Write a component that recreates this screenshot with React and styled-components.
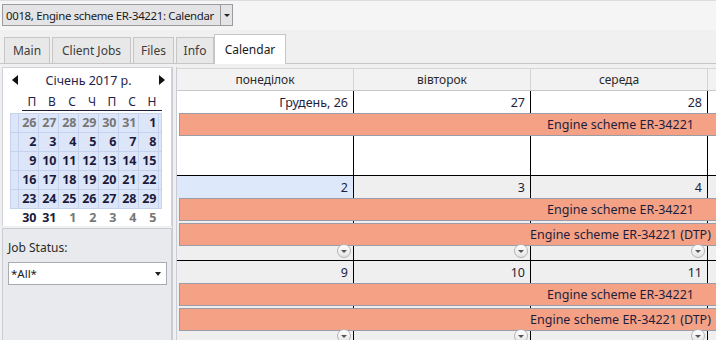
import React from "react";
import styled, { createGlobalStyle } from "styled-components";

const GlobalStyle = createGlobalStyle`
  body {
    margin: 0;
    background: #f0f0f0;
    font-family: "Noto Sans", "Open Sans", sans-serif;
    font-size: 12px;
    color: #1e1e1e;
  }
`;

const Window = styled.div`
  width: 716px;
  height: 340px;
  overflow: hidden;
  display: flex;
  flex-direction: column;
  background: #f0f0f0;
`;

const TopBar = styled.div`
  height: 30px;
  padding: 3px 0 0 2px;
  box-sizing: border-box;
  background: #f5f5f5;
  border-top: 1px solid #dcdcdc;
`;

const Combo = styled.div`
  width: 231px;
  height: 22px;
  box-sizing: border-box;
  display: flex;
  align-items: center;
  background: #e4e4e6;
  border: 1px solid #9b9ba0;
  font-size: 11.4px;
  color: #1a1a1a;
`;

const ComboText = styled.span`
  flex: 1;
  padding-left: 3px;
  white-space: nowrap;
  overflow: hidden;
  letter-spacing: -0.32px;
`;

const ComboButton = styled.span`
  width: 11px;
  height: 100%;
  border-left: 1px solid #9b9ba0;
  display: flex;
  align-items: center;
  justify-content: center;
  &::after {
    content: "";
    border-left: 3px solid transparent;
    border-right: 3px solid transparent;
    border-top: 3px solid #222;
  }
`;

const TabStrip = styled.div`
  height: 34px;
  box-sizing: border-box;
  display: flex;
  align-items: flex-end;
  padding-left: 4px;
  border-bottom: 1px solid #c6c6c6;
`;

const Tab = styled.div`
  width: ${(p) => p.$w}px;
  margin-right: ${(p) => p.$gap}px;
  height: ${(p) => (p.$active ? "30px" : "26px")};
  box-sizing: border-box;
  display: flex;
  align-items: center;
  justify-content: center;
  background: ${(p) => (p.$active ? "#ffffff" : "#e8e8e8")};
  border: 1px solid #c6c6c6;
  border-bottom: none;
  margin-bottom: ${(p) => (p.$active ? "-1px" : "0")};
  font-size: 12px;
  color: ${(p) => (p.$active ? "#1a1a1a" : "#3c3c3c")};
`;

const Body = styled.div`
  flex: 1;
  display: flex;
  padding-top: 3px;
  min-height: 0;
`;

const Sidebar = styled.div`
  width: 170px;
  margin-left: 2px;
  display: flex;
  flex-direction: column;
`;

const MiniCal = styled.div`
  height: 159px;
  box-sizing: border-box;
  background: #ffffff;
  border: 1px solid #cfd2d8;
  border-bottom: none;
`;

const CalHeader = styled.div`
  height: 23px;
  display: flex;
  align-items: center;
  justify-content: space-between;
  padding: 1px 6px 0 9px;
  box-sizing: border-box;
  font-size: 12.5px;
  color: #1e1e4a;
`;

const Arrow = styled.span`
  width: 0;
  height: 0;
  border-top: 5px solid transparent;
  border-bottom: 5px solid transparent;
  ${(p) =>
    p.$dir === "left"
      ? "border-right: 6px solid #111;"
      : "border-left: 6px solid #111;"}
`;

const DayNames = styled.div`
  display: grid;
  grid-template-columns: repeat(7, 20px);
  margin: 1px 0 0 19px;
  height: 18px;
  align-items: center;
  font-size: 12px;
  color: #1e1e4a;
  text-align: center;
  border-bottom: 1px solid #1e1e3c;
  width: 140px;
`;

const DateGrid = styled.div`
  display: grid;
  grid-template-columns: 8px repeat(7, 20px) 3px;
  grid-auto-rows: 19px;
  margin: 2px 0 0 8px;
`;

const DateCell = styled.div`
  box-sizing: border-box;
  background: ${(p) => (p.$shade ? "#dde6f8" : "transparent")};
  border: ${(p) => (p.$shade ? "1px solid #c4d2ee" : "1px solid transparent")};
  margin: 0 0 -1px -1px;
  text-align: right;
  padding-right: 2px;
  font-weight: 700;
  font-size: 12.5px;
  line-height: 17px;
  letter-spacing: -0.3px;
  color: ${(p) => (p.$other ? "#767676" : "#1a1a3c")};
`;

const StatusPanel = styled.div`
  flex: 1;
  margin-top: 2px;
  background: #e9eaee;
  border: 1px solid #c9ccd2;
  border-bottom: none;
  padding: 10px 0 0 5px;
`;

const Label = styled.div`
  font-size: 12px;
  color: #2a2a2a;
  margin-bottom: 6px;
`;

const Select = styled.div`
  width: 159px;
  height: 23px;
  box-sizing: border-box;
  background: #ffffff;
  border: 1px solid #a8abb2;
  display: flex;
  align-items: center;
  justify-content: space-between;
  padding: 0 5px 0 2px;
  font-size: 11.5px;
  &::after {
    content: "";
    border-left: 3.5px solid transparent;
    border-right: 3.5px solid transparent;
    border-top: 4px solid #222;
  }
`;

const Splitter = styled.div`
  width: 5px;
  box-sizing: border-box;
  border-left: 1px solid #c9ccd2;
  border-right: 1px solid #c9ccd2;
`;

const Scheduler = styled.div`
  flex: 1;
  overflow: hidden;
  padding-top: 1px;
`;

const Track = styled.div`
  width: 885px;
`;

const HeaderRow = styled.div`
  display: grid;
  grid-template-columns: repeat(5, 177px);
  height: 23px;
  box-sizing: border-box;
  background: #f2f2f2;
  border-top: 1px solid #d6d6d6;
  border-bottom: 1px solid #c8c8c8;
`;

const HeaderCell = styled.div`
  display: flex;
  align-items: center;
  justify-content: center;
  border-right: 1px solid #d4d4d4;
  font-size: 12px;
  color: #2a2a2a;
`;

const Week = styled.div`
  display: grid;
  grid-template-columns: repeat(5, 177px);
  grid-template-rows: 22px 23px 2px 23px 1fr;
  height: 85px;
  box-sizing: border-box;
  border-bottom: 1px solid #000;
`;

const Day = styled.div`
  grid-row: 1 / -1;
  grid-column: ${(p) => p.$col};
  position: relative;
  background: ${(p) => (p.$light ? "#ffffff" : "#efefef")};
  border-right: 1px solid #000;
`;

const DayNum = styled.div`
  height: 22px;
  box-sizing: border-box;
  padding-right: 5px;
  display: flex;
  align-items: center;
  justify-content: flex-end;
  background: ${(p) => (p.$today ? "#dee8fb" : "transparent")};
  font-size: 12.5px;
  color: #1e1e3c;
`;

const More = styled.span`
  position: absolute;
  right: 2px;
  bottom: 2px;
  width: 14px;
  height: 14px;
  box-sizing: border-box;
  border-radius: 50%;
  background: linear-gradient(#ffffff, #e4e4e4);
  border: 1px solid #b4b4b8;
  display: flex;
  align-items: center;
  justify-content: center;
  z-index: 2;
  &::after {
    content: "";
    margin-top: 1px;
    border-left: 3px solid transparent;
    border-right: 3px solid transparent;
    border-top: 3px solid #555;
  }
`;

const Bar = styled.div`
  grid-column: 1 / -1;
  grid-row: ${(p) => p.$row};
  margin-left: 2px;
  z-index: 1;
  box-sizing: border-box;
  background: #f4a186;
  border: 1px solid #9a9ca8;
  display: flex;
  align-items: center;
  justify-content: center;
  font-size: 12.5px;
  color: #1e1e3c;
`;

const tabs = [
  { t: "Main", w: 46, gap: 2 },
  { t: "Client Jobs", w: 79, gap: 2 },
  { t: "Files", w: 41, gap: 2 },
  { t: "Info", w: 38, gap: 0 },
  { t: "Calendar", w: 72, gap: 0 },
];
const dayNames = ["П", "В", "С", "Ч", "П", "С", "Н"];
const headers = ["понеділок", "вівторок", "середа", "четвер", "пʼятниця"];

const monthRows = [
  [26, 27, 28, 29, 30, 31, 1],
  [2, 3, 4, 5, 6, 7, 8],
  [9, 10, 11, 12, 13, 14, 15],
  [16, 17, 18, 19, 20, 21, 22],
  [23, 24, 25, 26, 27, 28, 29],
  [30, 31, 1, 2, 3, 4, 5],
];

const weeks = [
  { days: ["Грудень, 26", "27", "28", "29", "30"], light: true, bars: ["Engine scheme ER-34221"] },
  {
    days: ["2", "3", "4", "5", "6"],
    today: 0,
    bars: ["Engine scheme ER-34221", "Engine scheme ER-34221 (DTP)"],
    more: true,
  },
  {
    days: ["9", "10", "11", "12", "13"],
    bars: ["Engine scheme ER-34221", "Engine scheme ER-34221 (DTP)"],
    more: true,
  },
];

const MonthGrid = () => (
  <DateGrid>
    {monthRows.map((row, r) => {
      const shade = r < 5;
      return (
        <React.Fragment key={r}>
          <DateCell $shade={shade} />
          {row.map((d, i) => {
            const other = (r === 0 && d > 20) || (r === 5 && d < 10);
            return (
              <DateCell key={i} $shade={shade} $other={other}>
                {d}
              </DateCell>
            );
          })}
          <DateCell $shade={shade} />
        </React.Fragment>
      );
    })}
  </DateGrid>
);

export default function App() {
  return (
    <Window>
      <GlobalStyle />
      <TopBar>
        <Combo>
          <ComboText>0018, Engine scheme ER-34221: Calendar</ComboText>
          <ComboButton />
        </Combo>
      </TopBar>
      <TabStrip>
        {tabs.map(({ t, w, gap }) => (
          <Tab key={t} $w={w} $gap={gap} $active={t === "Calendar"}>
            {t}
          </Tab>
        ))}
      </TabStrip>
      <Body>
        <Sidebar>
          <MiniCal>
            <CalHeader>
              <Arrow $dir="left" />
              <span>Січень 2017 р.</span>
              <Arrow $dir="right" />
            </CalHeader>
            <DayNames>
              {dayNames.map((d, i) => (
                <span key={i}>{d}</span>
              ))}
            </DayNames>
            <MonthGrid />
          </MiniCal>
          <StatusPanel>
            <Label>Job Status:</Label>
            <Select>*All*</Select>
          </StatusPanel>
        </Sidebar>
        <Splitter />
        <Scheduler>
          <Track>
            <HeaderRow>
              {headers.map((h) => (
                <HeaderCell key={h}>{h}</HeaderCell>
              ))}
            </HeaderRow>
            {weeks.map((w, wi) => (
              <Week key={wi}>
                {w.days.map((d, i) => (
                  <Day key={i} $col={i + 1} $light={w.light}>
                    <DayNum $today={w.today === i}>{d}</DayNum>
                    {w.more && <More />}
                  </Day>
                ))}
                {w.bars.map((b, bi) => (
                  <Bar key={bi} $row={bi === 0 ? 2 : 4}>
                    {b}
                  </Bar>
                ))}
              </Week>
            ))}
          </Track>
        </Scheduler>
      </Body>
    </Window>
  );
}
